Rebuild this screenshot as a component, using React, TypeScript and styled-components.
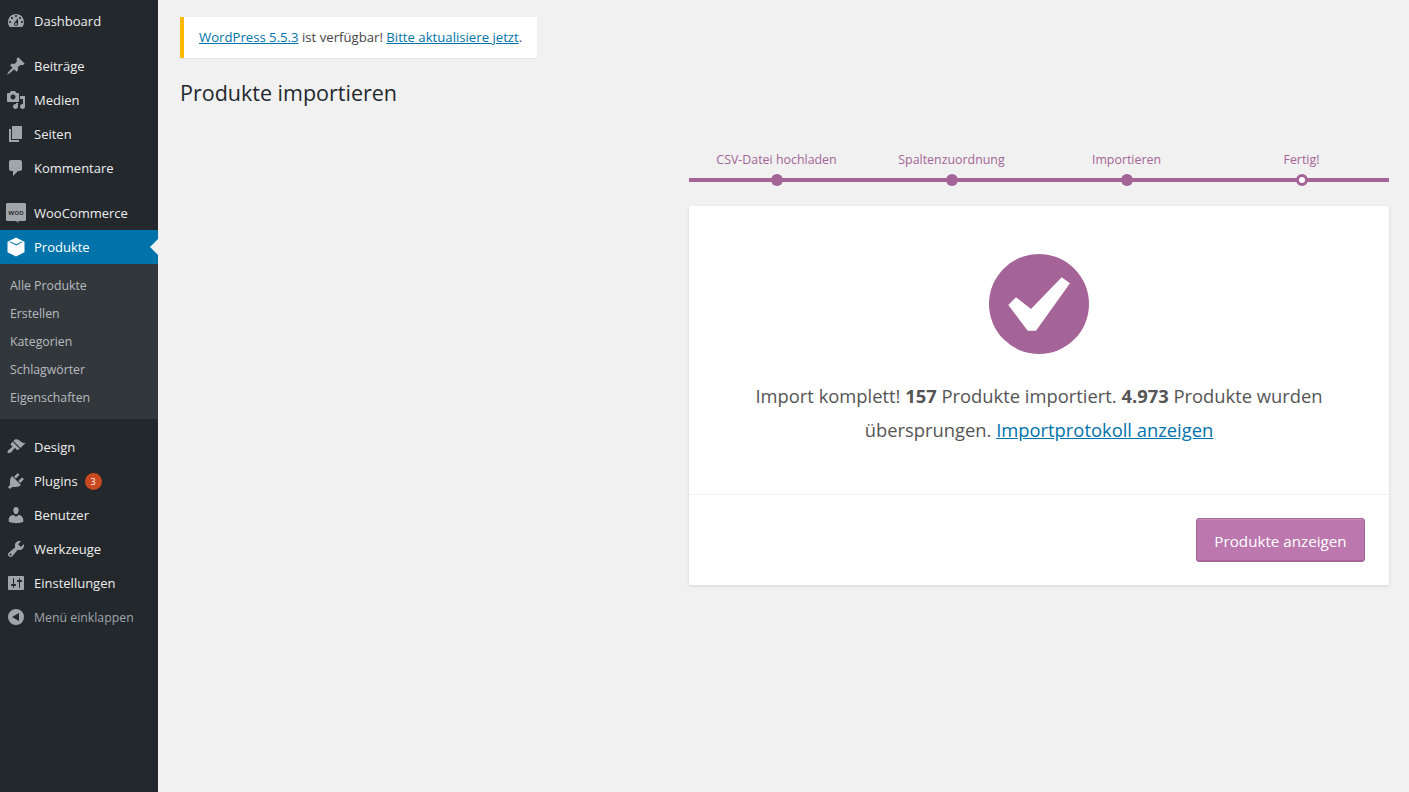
import { createGlobalStyle } from "styled-components";
import styled from "styled-components";

const font = `"Open Sans", "Noto Sans", "Liberation Sans", sans-serif`;
const purple = "#a46497";

const icons: Record<string, string> = {
  dashboard: "M3.76 16h12.48c1.1-1.37 1.76-3.11 1.76-5 0-4.42-3.58-8-8-8s-8 3.58-8 8c0 1.89.66 3.63 1.76 5zM10 4c.55 0 1 .45 1 1s-.45 1-1 1-1-.45-1-1 .45-1 1-1zM6 6c.55 0 1 .45 1 1s-.45 1-1 1-1-.45-1-1 .45-1 1-1zm8 0c.55 0 1 .45 1 1s-.45 1-1 1-1-.45-1-1 .45-1 1-1zm-5.37 5.55L12 7v6c0 1.1-.9 2-2 2s-2-.9-2-2c0-.57.24-1.08.63-1.45zM4 10c.55 0 1 .45 1 1s-.45 1-1 1-1-.45-1-1 .45-1 1-1zm12 0c.55 0 1 .45 1 1s-.45 1-1 1-1-.45-1-1 .45-1 1-1zm-5 3c0-.55-.45-1-1-1s-1 .45-1 1 .45 1 1 1 1-.45 1-1z",
  post: "M10.44 3.02l1.82-1.82 6.36 6.35-1.83 1.82c-1.05-.68-2.48-.57-3.41.36l-.75.75c-.92.93-1.04 2.35-.35 3.41l-1.83 1.82-2.41-2.41-2.8 2.79c-.42.42-3.38 2.71-3.8 2.29s1.86-3.39 2.28-3.81l2.79-2.79L4.1 9.36l1.83-1.82c1.05.69 2.48.57 3.4-.36l.75-.75c.93-.92 1.05-2.35.36-3.41z",
  media: "M13 11V4c0-.55-.45-1-1-1h-1.67L9 1H5L3.67 3H2c-.55 0-1 .45-1 1v7c0 .55.45 1 1 1h10c.55 0 1-.45 1-1zM7 4.5c1.38 0 2.5 1.12 2.5 2.5S8.38 9.5 7 9.5 4.5 8.38 4.5 7 5.62 4.5 7 4.5zM14 6h5v10.5c0 1.38-1.12 2.5-2.5 2.5S14 17.88 14 16.5s1.12-2.5 2.5-2.5c.17 0 .34.02.5.05V9h-3V6zm-4 8.05V13h2v3.5c0 1.38-1.12 2.5-2.5 2.5S7 17.88 7 16.5 8.12 14 9.5 14c.17 0 .34.02.5.05z",
  page: "M6 15V2h10v13H6zm-1 1h8v2H3V5h2v11z",
  comments: "M5 2h9c1.1 0 2 .9 2 2v7c0 1.1-.9 2-2 2h-2l-5 5v-5H5c-1.1 0-2-.9-2-2V4c0-1.1.9-2 2-2z",
  appearance: "M14.48 11.06L7.41 3.99l1.5-1.5c.5-.56 2.3-.47 3.51.32 1.21.8 1.43 1.28 2.91 2.1 1.18.64 2.45 1.26 4.45.85zm-.71.71L6.7 4.7 4.93 6.47c-.39.39-.39 1.02 0 1.41l1.06 1.06c.39.39.39 1.03 0 1.42-.6.6-1.43 1.11-2.21 1.69-.35.26-.7.53-1.01.84C1.43 13.23.99 14.9 1.84 15.75c.84.84 2.52.41 3.86-.93.31-.31.58-.66.84-1.01.58-.78 1.09-1.61 1.69-2.21.39-.39 1.03-.39 1.42 0l1.06 1.06c.39.39 1.02.39 1.41 0z",
  plugins: "M13.11 4.36L9.87 7.6 8 5.73l3.24-3.24c.35-.34 1.05-.2 1.56.32.52.51.66 1.21.31 1.55zm-8 1.77l.91-1.12 9.01 9.01-1.19.84c-.71.71-2.63 1.16-3.82 1.16H6.14L4.9 17.26c-.59.59-1.54.59-2.12 0-.59-.58-.59-1.53 0-2.12l1.24-1.24v-3.88c0-1.13.4-3.19 1.09-3.89zm7.26 3.97l3.24-3.24c.34-.35 1.04-.21 1.55.31.52.51.66 1.21.31 1.55l-3.24 3.25z",
  users: "M10 9.25c-2.27 0-2.73-3.44-2.73-3.44C7 4.02 7.82 2 9.97 2c2.16 0 2.98 2.02 2.71 3.81 0 0-.41 3.44-2.68 3.44zm0 2.57L12.72 10c2.39 0 4.52 2.33 4.52 4.53v2.49s-3.65 1.13-7.24 1.13c-3.65 0-7.24-1.13-7.24-1.13v-2.49c0-2.25 1.94-4.48 4.47-4.48z",
  tools: "M16.68 9.77c-1.34 1.34-3.3 1.67-4.95.99l-5.41 6.52c-.99.99-2.59.99-3.58 0s-.99-2.59 0-3.57l6.52-5.42c-.68-1.65-.35-3.61.99-4.95 1.28-1.28 3.12-1.62 4.72-1.06l-2.89 2.89 2.82 2.82 2.86-2.87c.53 1.58.18 3.39-1.08 4.65zM3.81 16.21c.4.39 1.04.39 1.43 0 .4-.4.4-1.04 0-1.43-.39-.4-1.03-.4-1.43 0-.39.39-.39 1.03 0 1.43z",
  settings: "M18 16V4c0-.55-.45-1-1-1H3c-.55 0-1 .45-1 1v12c0 .55.45 1 1 1h14c.55 0 1-.45 1-1zM8 11h1c.55 0 1 .45 1 1s-.45 1-1 1H8v1.5c0 .28-.22.5-.5.5s-.5-.22-.5-.5V13H6c-.55 0-1-.45-1-1s.45-1 1-1h1V5.5c0-.28.22-.5.5-.5s.5.22.5.5V11zm5-2h-1c-.55 0-1-.45-1-1s.45-1 1-1h1V5.5c0-.28.22-.5.5-.5s.5.22.5.5V7h1c.55 0 1 .45 1 1s-.45 1-1 1h-1v5.5c0 .28-.22.5-.5.5s-.5-.22-.5-.5V9z",
  collapse: "M10 2a8 8 0 1 1 0 16 8 8 0 0 1 0-16zm3 4l-7 4 7 4z",
  product: "M10 .5l8.500 4.300v10.400L10 19.500 1.500 15.200V4.800zM3.500 5l6.700 3.400 6.300-3.400-1-.5-5.300 2.800-5.700-2.800z",
};

const GlobalStyle = createGlobalStyle`
  html, body {
    margin: 0;
    background: #f1f1f1;
    font-family: ${font};
    font-size: 13px;
    color: #444;
  }
`;

const Page = styled.div`
  display: flex;
  min-height: 100vh;
`;

const Sidebar = styled.nav`
  flex: 0 0 158px;
  background: #23282d;
  padding: 4px 0 0;
  box-sizing: border-box;
`;

const MenuGroup = styled.div`
  margin-bottom: 11px;
`;

const MenuItem = styled.div<{ $active?: boolean; $muted?: boolean }>`
  position: relative;
  display: flex;
  align-items: center;
  height: 34px;
  padding-left: 6px;
  background: ${(p) => (p.$active ? "#0073aa" : "transparent")};
  color: ${(p) => (p.$active ? "#fff" : p.$muted ? "#a0a5aa" : "#eee")};
  font-size: ${(p) => (p.$muted ? "12.3px" : "13px")};

  svg {
    flex: 0 0 20px;
    fill: ${(p) => (p.$active ? "#fff" : "#a0a5aa")};
  }

  ${(p) =>
    p.$active &&
    `&::after {
      content: "";
      position: absolute;
      right: 0;
      top: 9px;
      border: 8px solid transparent;
      border-right-color: #f1f1f1;
      border-left-width: 0;
    }`}
`;

const MenuLabel = styled.span`
  margin-left: 8px;
`;

const Badge = styled.span`
  display: inline-flex;
  align-items: center;
  justify-content: center;
  width: 17px;
  height: 17px;
  margin-left: 7px;
  border-radius: 50%;
  background: #ca4a1f;
  color: #fff;
  font-size: 9px;
`;

const SubMenu = styled.div`
  background: #32373c;
  padding: 8px 0 7px;
`;

const SubItem = styled.div`
  height: 28px;
  line-height: 28px;
  padding-left: 10px;
  font-size: 12.3px;
  color: rgba(240, 245, 250, 0.7);
`;

const Main = styled.main`
  flex: 1;
  min-width: 0;
  padding: 17px 20px 0 22px;
`;

const Notice = styled.div`
  display: inline-block;
  box-sizing: border-box;
  height: 41px;
  line-height: 41px;
  padding: 0 15px;
  background: #fff;
  border-left: 4px solid #ffb900;
  box-shadow: 0 1px 1px rgba(0, 0, 0, 0.04);
  font-size: 13.17px;
  color: #444;
`;

const Link = styled.a`
  color: #0073aa;
  text-decoration: underline;
`;

const Title = styled.h1`
  margin: 19px 0 0;
  font-size: 21.5px;
  line-height: 32px;
  font-weight: 400;
  color: #23282d;
`;

const Wizard = styled.div`
  width: 700px;
  margin: 39px 0 0 auto;
`;

const Steps = styled.ol`
  display: flex;
  list-style: none;
  margin: 0;
  padding: 0;
`;

const Step = styled.li`
  position: relative;
  flex: 1;
  box-sizing: border-box;
  height: 34px;
  text-align: center;
  font-size: 12.4px;
  line-height: 24px;
  color: ${purple};
  border-bottom: 4px solid ${purple};

  &::after {
    content: "";
    position: absolute;
    left: 50%;
    bottom: -8px;
    width: 12px;
    height: 12px;
    margin-left: -6px;
    border-radius: 50%;
    background: ${purple};
  }
`;

const StepLast = styled(Step)`
  &::after {
    box-sizing: border-box;
    border: 3px solid ${purple};
    background: #fff;
  }
`;

const Card = styled.section`
  margin-top: 24px;
  background: #fff;
  box-shadow: 0 1px 3px rgba(0, 0, 0, 0.13);
`;

const Done = styled.div`
  padding: 48px 48px 47px;
  text-align: center;
  border-bottom: 1px solid #eee;
`;

const Check = styled.svg`
  display: block;
  width: 100px;
  height: 100px;
  margin: 0 auto 25px;
`;

const Message = styled.p`
  margin: 0;
  font-size: 18.36px;
  line-height: 34px;
  color: #555;
`;

const Actions = styled.div`
  display: flex;
  justify-content: flex-end;
  padding: 23px 24px;
`;

const ViewButton = styled.a`
  box-sizing: border-box;
  display: flex;
  align-items: center;
  justify-content: center;
  width: 169px;
  height: 44px;
  padding-top: 2px;
  border: 1px solid #a36597;
  border-radius: 3px;
  background: #bb77ae;
  box-shadow: inset 0 1px 0 rgba(255, 255, 255, 0.15), inset 0 -1px 0 #a36597;
  color: #fff;
  font-size: 15.2px;
`;

function Icon({ name }: { name: string }) {
  return (
    <svg width="20" height="20" viewBox="0 0 20 20">
      <path d={icons[name]} />
    </svg>
  );
}

function WooIcon() {
  return (
    <svg width="20" height="20" viewBox="0 0 20 20">
      <path d="M1.500 0h17c.8 0 1.500.7 1.500 1.500v15c0 .8-.7 1.500-1.500 1.500H12l1 2-3-2H1.500C.7 18 0 17.300 0 16.500v-15C0 .7.700 0 1.500 0z" />
      <text x="10" y="11.800" textAnchor="middle" fontSize="7.500" fontWeight="600" fill="#23282d" fontFamily="Open Sans, sans-serif">
        woo
      </text>
    </svg>
  );
}

const topGroup = [{ icon: "dashboard", label: "Dashboard" }];
const contentGroup = [
  { icon: "post", label: "Beiträge" },
  { icon: "media", label: "Medien" },
  { icon: "page", label: "Seiten" },
  { icon: "comments", label: "Kommentare" },
];
const subItems = ["Alle Produkte", "Erstellen", "Kategorien", "Schlagwörter", "Eigenschaften"];
const adminGroup = [
  { icon: "users", label: "Benutzer" },
  { icon: "tools", label: "Werkzeuge" },
  { icon: "settings", label: "Einstellungen" },
];

export default function App() {
  return (
    <Page>
      <GlobalStyle />
      <Sidebar>
        <MenuGroup>
          {topGroup.map((m) => (
            <MenuItem key={m.label}>
              <Icon name={m.icon} />
              <MenuLabel>{m.label}</MenuLabel>
            </MenuItem>
          ))}
        </MenuGroup>
        <MenuGroup>
          {contentGroup.map((m) => (
            <MenuItem key={m.label}>
              <Icon name={m.icon} />
              <MenuLabel>{m.label}</MenuLabel>
            </MenuItem>
          ))}
        </MenuGroup>
        <MenuItem>
          <WooIcon />
          <MenuLabel>WooCommerce</MenuLabel>
        </MenuItem>
        <MenuItem $active>
          <Icon name="product" />
          <MenuLabel>Produkte</MenuLabel>
        </MenuItem>
        <MenuGroup>
          <SubMenu>
            {subItems.map((s) => (
              <SubItem key={s}>{s}</SubItem>
            ))}
          </SubMenu>
        </MenuGroup>
        <MenuItem>
          <Icon name="appearance" />
          <MenuLabel>Design</MenuLabel>
        </MenuItem>
        <MenuItem>
          <Icon name="plugins" />
          <MenuLabel>Plugins</MenuLabel>
          <Badge>3</Badge>
        </MenuItem>
        {adminGroup.map((m) => (
          <MenuItem key={m.label}>
            <Icon name={m.icon} />
            <MenuLabel>{m.label}</MenuLabel>
          </MenuItem>
        ))}
        <MenuItem $muted>
          <Icon name="collapse" />
          <MenuLabel>Menü einklappen</MenuLabel>
        </MenuItem>
      </Sidebar>
      <Main>
        <Notice>
          <Link>WordPress 5.5.3</Link> ist verfügbar! <Link>Bitte aktualisiere jetzt</Link>.
        </Notice>
        <Title>Produkte importieren</Title>
        <Wizard>
          <Steps>
            <Step>CSV-Datei hochladen</Step>
            <Step>Spaltenzuordnung</Step>
            <Step>Importieren</Step>
            <StepLast>Fertig!</StepLast>
          </Steps>
          <Card>
            <Done>
              <Check viewBox="0 0 100 100">
                <circle cx="50" cy="50" r="50" fill={purple} />
                <path d="M19.300 51L27 43.300 42 55 72.700 23.300 81 29.300 47 76.700H38.700z" fill="#fff" />
              </Check>
              <Message>
                Import komplett! <strong>157</strong> Produkte importiert. <strong>4.973</strong> Produkte wurden übersprungen.{" "}
                <Link>Importprotokoll anzeigen</Link>
              </Message>
            </Done>
            <Actions>
              <ViewButton>Produkte anzeigen</ViewButton>
            </Actions>
          </Card>
        </Wizard>
      </Main>
    </Page>
  );
}
